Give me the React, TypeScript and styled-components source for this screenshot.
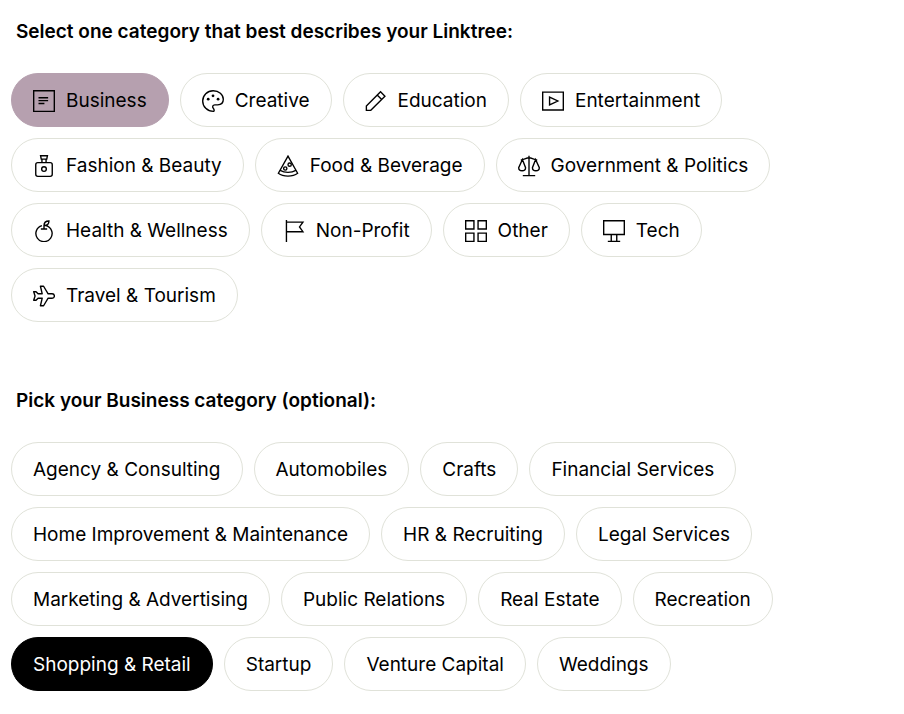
import React, { useState } from "react";
import styled, { createGlobalStyle, css } from "styled-components";

const GlobalStyle = createGlobalStyle`
  *, *::before, *::after { box-sizing: border-box; }
  body {
    margin: 0;
    background: #ffffff;
    color: #000000;
    font-family: Inter, "Liberation Sans", sans-serif;
  }
`;

const Page = styled.main`
  display: flex;
  flex-direction: column;
  gap: 65px;
  padding: 18px 11px 23px;
`;

const Section = styled.section`
  display: flex;
  flex-direction: column;
  gap: 28px;
  max-width: 800px;
`;

const Heading = styled.h2`
  margin: 0;
  padding-left: 5px;
  font-size: 19px;
  font-weight: 600;
  line-height: 27px;
`;

const Pills = styled.div`
  display: flex;
  flex-wrap: wrap;
  gap: 11px;
`;

type Tone = "mauve" | "black";

const tones = {
  mauve: css`
    background: #b6a0af;
    border-color: #b6a0af;
    color: #000000;
  `,
  black: css`
    background: #000000;
    border-color: #000000;
    color: #ffffff;
  `,
};

const Pill = styled.button<{ $tone?: Tone }>`
  display: inline-flex;
  align-items: center;
  gap: 11px;
  height: 54px;
  padding: 0 21px;
  border: 1px solid #e0e2d9;
  border-radius: 27px;
  background: #ffffff;
  color: #000000;
  font-family: inherit;
  font-size: 19px;
  font-weight: 400;
  line-height: 27px;
  white-space: nowrap;
  cursor: pointer;
  ${({ $tone }) => $tone && tones[$tone]}
`;

const Icon = styled.svg.attrs({ viewBox: "0 0 16 16", "aria-hidden": true })`
  flex: none;
  width: 22px;
  height: 22px;
  margin-top: 2px;
  fill: none;
  stroke: currentColor;
  stroke-width: 1;
`;

const categories: { name: string; icon: React.ReactNode }[] = [
  {
    name: "Business",
    icon: (
      <Icon>
        <path d="M.5.5h15v15H.5zM4 5.600h7M4 7.700h7M4 9.800h4.300" />
      </Icon>
    ),
  },
  {
    name: "Creative",
    icon: (
      <Icon>
        <path d="M8.200 15.500C3.900 15.500.5 12.200.5 8 .5 3.800 3.900.5 8.100.5c4.200 0 7.400 2.700 7.400 6.300 0 2.500-1.700 4-4.100 4H9.300c-1.500 0-2 1.500-1.100 2.500.8.9.9 2.200 0 2.200z" />
        <g fill="currentColor" stroke="none">
          <circle cx="4.500" cy="6.700" r="1" />
          <circle cx="8" cy="4.200" r="1" />
          <circle cx="11.700" cy="6.700" r="1" />
        </g>
      </Icon>
    ),
  },
  {
    name: "Education",
    icon: (
      <Icon>
        <path d="M1 11.600 11.300 1.300l3.200 3.200L4.200 14.800H1zM8.900 3.700l3.200 3.200" />
      </Icon>
    ),
  },
  {
    name: "Entertainment",
    icon: (
      <Icon>
        <path d="M.5 1.500h15v13H.5zM5.500 5.200v5.600L11.500 8z" />
      </Icon>
    ),
  },
  {
    name: "Fashion & Beauty",
    icon: (
      <Icon>
        <rect x="2" y="5.500" width="12" height="10" rx="1.500" />
        <path d="M5.500.5h5l-.5 2.500h-4zM6.500 3v2.500M9.500 3v2.500" />
        <circle cx="8" cy="10.200" r="1.700" />
      </Icon>
    ),
  },
  {
    name: "Food & Beverage",
    icon: (
      <Icon>
        <path d="M8 .8 1 13.300c3.500 2.700 10.500 2.700 14 0zM2.300 11.200c3.200 1.900 8.200 1.900 11.400 0" />
        <circle cx="6" cy="9.800" r="1.200" />
        <circle cx="9.200" cy="7" r="1.200" />
      </Icon>
    ),
  },
  {
    name: "Government & Politics",
    icon: (
      <Icon>
        <path d="M8 .5v14.500M3.500 15h9M2 3.500c2 0 4-1.500 6-1.500s4 1.500 6 1.500M3.200 3.300.5 9.200c0 3 5 3 5 0zM12.800 3.300l-2.300 5.900c0 3 5 3 5 0z" />
      </Icon>
    ),
  },
  {
    name: "Health & Wellness",
    icon: (
      <Icon>
        <path d="M6.500 4.100a5.900 5.900 0 1 0 3 0M5.700 6.500h4.600M8 6.500V4.400M8 4C8 2 9 .7 11.600.7 11.600 2.700 10.500 4 8 4z" />
      </Icon>
    ),
  },
  {
    name: "Non-Profit",
    icon: (
      <Icon>
        <path d="M2.500 0v16M2.500 1.500h12L12 5l2.500 3.500h-12" />
      </Icon>
    ),
  },
  {
    name: "Other",
    icon: (
      <Icon>
        <path d="M.5.5H6.500V6.500H.5zM9.500.5h6V6.500h-6zM.5 9.500H6.500v6H.5zM9.500 9.500h6v6h-6z" />
      </Icon>
    ),
  },
  {
    name: "Tech",
    icon: (
      <Icon>
        <path d="M.5.500h15v10H.5zM6 10.500v5M10 10.500v5M3.500 15.500h9" />
      </Icon>
    ),
  },
  {
    name: "Travel & Tourism",
    icon: (
      <Icon>
        <path
          strokeLinejoin="round"
          d="M.5 4.900h1.700l1.500 1.500h3L5.400.9h2.300l3.300 5.500h2.900c2.200 0 2.200 3.200 0 3.200h-2.900l-3.300 5.500H5.400l1.300-5.500h-3l-1.500 1.500H.5l1-3.100z"
        />
      </Icon>
    ),
  },
];

const businessCategories = [
  "Agency & Consulting",
  "Automobiles",
  "Crafts",
  "Financial Services",
  "Home Improvement & Maintenance",
  "HR & Recruiting",
  "Legal Services",
  "Marketing & Advertising",
  "Public Relations",
  "Real Estate",
  "Recreation",
  "Shopping & Retail",
  "Startup",
  "Venture Capital",
  "Weddings",
];

export default function App() {
  const [category, setCategory] = useState("Business");
  const [subcategory, setSubcategory] = useState("Shopping & Retail");

  return (
    <>
      <GlobalStyle />
      <Page>
        <Section>
          <Heading id="category">Select one category that best describes your Linktree:</Heading>
          <Pills role="group" aria-labelledby="category">
            {categories.map(({ name, icon }) => (
              <Pill
                key={name}
                type="button"
                aria-pressed={name === category}
                $tone={name === category ? "mauve" : undefined}
                onClick={() => setCategory(name)}
              >
                {icon}
                {name}
              </Pill>
            ))}
          </Pills>
        </Section>
        <Section>
          <Heading id="subcategory">Pick your {category} category (optional):</Heading>
          <Pills role="group" aria-labelledby="subcategory">
            {businessCategories.map((name) => (
              <Pill
                key={name}
                type="button"
                aria-pressed={name === subcategory}
                $tone={name === subcategory ? "black" : undefined}
                onClick={() => setSubcategory(name)}
              >
                {name}
              </Pill>
            ))}
          </Pills>
        </Section>
      </Page>
    </>
  );
}
